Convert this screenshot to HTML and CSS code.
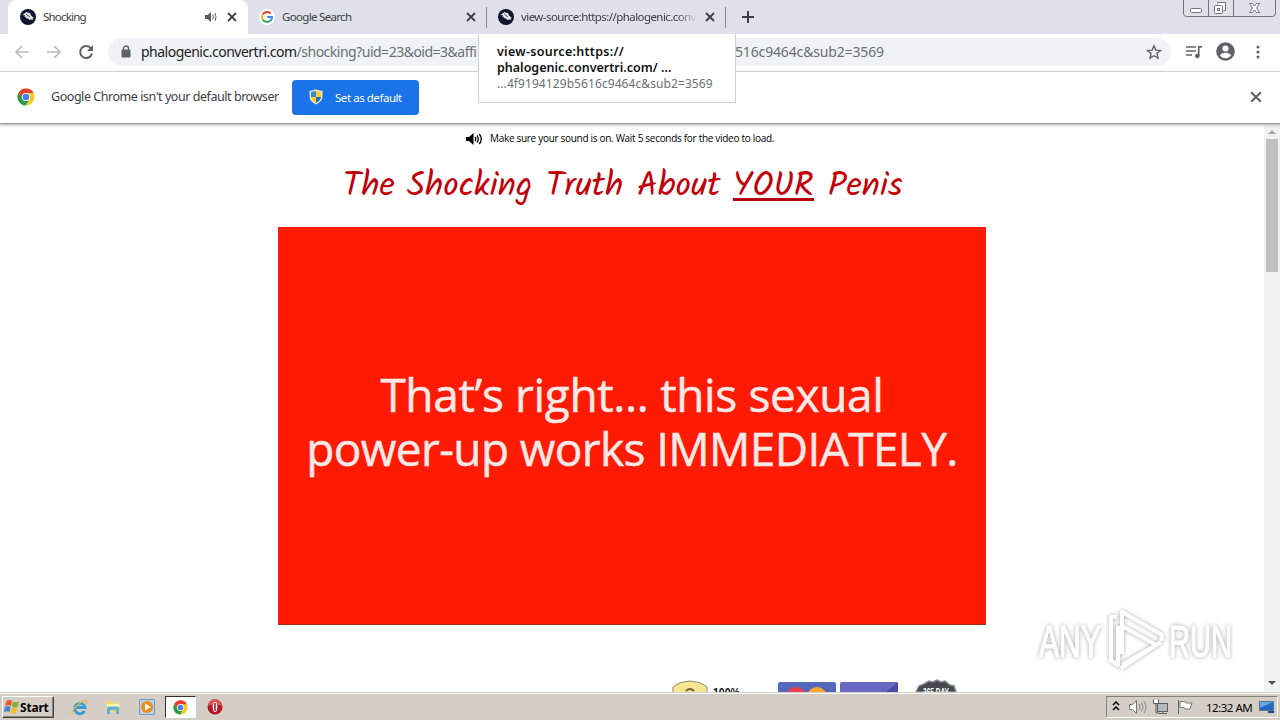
FILE: index.html
```html
<!DOCTYPE html>
<html lang="en">
<head>
  <meta charset="UTF-8">
  <title>Shocking</title>
  <link rel="stylesheet" href="styles.css">
</head>
<body>
  <svg width="0" height="0" class="defs">
    <symbol id="bird" viewBox="0 0 16 16">
      <circle cx="8" cy="8" r="8" fill="#11142f"/>
      <path d="M2.500 6 6.500 3l1.500.7L10 4l1 2.500 3 2.500-1.500.2 1 1.600-2.500-.3-1.500.5L8 9.500l-2.800-.5 1.200-1L4 7.500l1.500-1z" fill="#e4e7ec"/>
      <path d="m6 5 4 3" stroke="#11142f" stroke-width=".7"/>
    </symbol>
    <symbol id="chrome" viewBox="0 0 18 18">
      <circle cx="9" cy="9" r="8.5" fill="#fbc926"/>
      <path d="M1.6 4.8A8.5 8.5 0 0 1 16.6 5H9a4 4 0 0 0-3.800 5z" fill="#e53d30"/>
      <path d="M1.6 4.8A8.5 8.5 0 0 0 8.5 17.5l4-6.5a4 4 0 0 1-7.200-.3z" fill="#249a50"/>
      <circle cx="9" cy="9" r="4.1" fill="#fff"/>
      <circle cx="9" cy="9" r="3.3" fill="#4382ec"/>
    </symbol>
    <symbol id="close" viewBox="0 0 10 10">
      <path d="m1 1 8 8M9 1 1 9" stroke="currentColor" stroke-width="1.8"/>
    </symbol>
  </svg>

  <div class="tabstrip">
    <div class="tab active">
      <svg class="favicon"><use href="#bird"/></svg>
      <span class="title t-shocking">Shocking</span>
      <svg class="audio" width="13" height="10" viewBox="0 0 13 10"><path d="M0 3h2.500L6 0v10L2.500 7H0z" fill="#5a5d62"/><path d="M7.700 2.500q1.500 2.500 0 5M10 1q2 4 0 8" fill="none" stroke="#5a5d62"/></svg>
      <svg class="close"><use href="#close"/></svg>
    </div>
    <div class="tab">
      <span class="google"><svg width="12" height="12" viewBox="0 0 12 12" fill="none" stroke-width="2"><path d="M9.700 2.500A5 5 0 0 0 1.700 3.500" stroke="#ea4335"/><path d="M1.700 3.500a5 5 0 0 0 0 5" stroke="#fbbc05"/><path d="M1.700 8.500a5 5 0 0 0 7.500 1.300" stroke="#34a853"/><path d="M6.200 6H11q0 2.500-1.800 3.800" stroke="#4285f4"/></svg></span>
      <span class="title t-search">Google Search</span>
      <svg class="close"><use href="#close"/></svg>
    </div>
    <div class="tab last">
      <svg class="favicon"><use href="#bird"/></svg>
      <span class="title t-source">view-source:https://phalogenic.conv</span>
      <svg class="close"><use href="#close"/></svg>
    </div>
    <svg class="newtab" width="12" height="12" viewBox="0 0 12 12"><path d="M6 0v12M0 6h12" stroke="#3c4043" stroke-width="2"/></svg>
    <svg class="winbtns" width="93" height="17" viewBox="0 0 93 17" fill="none" stroke="#70757d">
      <path d="M.5 0v13q0 3.500 3 3.500h86q3 0 3-3.500V0M25.500 0v16M50.500 0v16"/>
      <rect x="7.500" y="8.500" width="11" height="4" rx="1" fill="#fff"/>
      <path d="M34.500 3.500v-1h8v8h-2" fill="#fff"/>
      <rect x="31.500" y="5.500" width="8" height="8" rx="1" fill="#fff"/><rect x="34.500" y="8.500" width="2" height="2"/>
      <path d="M66.500 3.500h3l2 2.500 2-2.500h3L73.500 8l3 4.500h-3l-2-2.500-2 2.500h-3l3-4.500z" fill="#fff"/>
    </svg>
  </div>

  <div class="toolbar">
    <svg class="nav" width="88" height="18" viewBox="0 0 88 18" fill="none" stroke="#b9bbbf" stroke-width="1.700">
      <path d="M15.500 9H3M9 3 3 9l6 6M34 9h13M41 3l6 6-6 6"/>
      <path d="M78 5.500A6 6 0 1 0 79 10.500" stroke="#5f6368" stroke-width="2"/><path d="M80 2v6h-6z" fill="#5f6368" stroke="none"/>
    </svg>
    <div class="omnibox">
      <svg width="10" height="13" viewBox="0 0 10 13"><path d="M2.500 5V3.500a2.500 2.500 0 0 1 5 0V5" fill="none" stroke="#5f6368" stroke-width="1.400"/><rect x=".5" y="4.500" width="9" height="8" rx="1" fill="#5f6368"/></svg>
      <span class="url"><b>phalogenic.convertri.com</b>/shocking?uid=23&amp;oid=3&amp;affi</span>
      <span class="url-end">516c9464c&amp;sub2=3569</span>
      <svg class="star" width="16" height="16" viewBox="0 0 16 16"><path d="m8 1.800 1.800 4.300 4.700.4-3.600 3 1.100 4.600L8 11.700l-4 2.400 1.100-4.600-3.600-3 4.700-.4z" fill="none" stroke="#5f6368" stroke-width="1.400"/></svg>
    </div>
    <svg class="media" width="16" height="14" viewBox="0 0 16 14"><path d="M0 2h10M0 6h10M0 10h6" stroke="#5f6368" stroke-width="1.700"/><path d="M12.700 11V1.800H16" fill="none" stroke="#5f6368" stroke-width="1.700"/><circle cx="11.300" cy="11" r="2.300" fill="#5f6368"/></svg>
    <svg class="person" width="19" height="19" viewBox="0 0 19 19"><circle cx="9.500" cy="9.500" r="9.300" fill="#5f6368"/><circle cx="9.500" cy="6.500" r="3" fill="#fff"/><path d="M3.800 13.200q2.200-2.400 5.700-2.400t5.700 2.400q-2 3-5.700 3t-5.700-3z" fill="#fff"/></svg>
    <svg class="more" width="4" height="14" viewBox="0 0 4 14" fill="#5f6368"><circle cx="2" cy="2" r="1.500"/><circle cx="2" cy="7" r="1.500"/><circle cx="2" cy="12" r="1.500"/></svg>
  </div>

  <div class="infobar">
    <svg class="logo" width="18" height="18"><use href="#chrome"/></svg>
    <span class="info-text">Google Chrome isn't your default browser</span>
    <div class="default-btn">
      <svg width="14" height="16" viewBox="0 0 14 16"><path d="M7 .5 13.500 2v5q0 5.500-6.500 8.500Q.5 12.500.5 7V2z" fill="#eee6c0"/><path d="M7 2v6H2V3z" fill="#3d86d6"/><path d="M7 2v6h5V3z" fill="#f8ce32"/><path d="M2 8h5v6Q2.500 11.500 2 8z" fill="#f8ce32"/><path d="M12 8H7v6q4.500-2.500 5-6z" fill="#286dbe"/></svg>
      <span>Set as default</span>
    </div>
    <svg class="close" viewBox="0 0 10 10"><use href="#close"/></svg>
  </div>

  <div class="viewport">
    <div class="page">
      <div class="sound">
        <svg width="17" height="12" viewBox="0 0 17 12"><path d="M0 4h3l4.500-4v12L3 8H0z"/><path d="M9 4q1.500 2 0 4M11 2.500q2.500 3.500 0 7M13.300 1q4 5 0 10" fill="none" stroke="#000" stroke-width="1.300"/></svg>
        <span>Make sure your sound is on. Wait 5 seconds for the video to load.</span>
      </div>
      <h1><span class="w1">The</span><span class="w2">Shocking</span><span class="w3">Truth</span><span class="w4">About</span><u class="w5">YOUR</u><span class="w6">Penis</span></h1>
      <div class="video">
        <div class="line1">That’s right... this sexual</div>
        <div class="line2">power-up works IMMEDIATELY.</div>
      </div>
      <svg class="badges" width="286" height="13" viewBox="0 0 286 13">
        <path d="M1 14V8Q3 6 9 3.500q9-3 18 0Q33 6 35 8v6z" fill="#f8e693" stroke="#8f8872"/>
        <path d="M14 12q4-4 8 0" fill="none" stroke="#76663b" stroke-width="2"/>
        <text x="41" y="18" class="pct" textLength="27" lengthAdjust="spacingAndGlyphs">100%</text>
        <rect x="106" y="3" width="58" height="30" rx="2" fill="#5368bb"/>
        <circle cx="124" cy="18" r="10" fill="#ee3e4d"/><circle cx="145" cy="18" r="10" fill="#fba62d"/>
        <rect x="168" y="3" width="58" height="30" rx="2" fill="#6867c2"/><path d="M226 3v10h-12z" fill="#4a4cac"/>
        <path d="m244 13 3-6 5-2 5-3 4 1 4-2 4 2 4-1 5 4 4 1 2 6z" fill="#44494f" stroke="#858a8e" stroke-width="1.500"/>
        <text x="251" y="17" class="days" textLength="26" lengthAdjust="spacingAndGlyphs">365 DAY</text>
      </svg>
    </div>
    <div class="scrollbar">
      <svg width="8" height="5" viewBox="0 0 8 5"><path d="m0 4 4-4 4 4z" fill="#a3a3a3"/></svg>
      <div class="thumb"></div>
      <svg width="8" height="5" viewBox="0 0 8 5"><path d="m0 0 4 4 4-4z" fill="#505050"/></svg>
    </div>
  </div>

  <div class="taskbar">
    <div class="start">
      <svg width="16" height="16" viewBox="0 0 16 16"><path d="M2.500 2q3-2 5.500 0L7 7Q4.500 5.500 1 7z" fill="#eb5b24"/><path d="M9 2.500q3 1.500 6 0L13.500 8q-3 1-5.500-.5z" fill="#7bb52c"/><path d="M1 8q3-1.500 5.500 0l-1 5Q3 11.500 0 13z" fill="#3d83d1"/><path d="M7.500 8.500q3 1.500 6 0L12 14q-3 1-5.500-.5z" fill="#f7bf2c"/></svg>
      <b>Start</b>
    </div>
    <svg class="ie" width="17" height="17" viewBox="0 0 17 17" fill="none"><path d="M13.500 12A5.200 5.200 0 1 1 14 8.500H5" stroke="#3a9ada" stroke-width="2.800"/><path d="M2 15q-3-1 3-7.500T15.500 2q1 1-1 3.500" stroke="#e5b83c" stroke-width="1.300"/></svg>
    <svg class="folder" width="16" height="16" viewBox="0 0 16 16"><path d="M1 2h5l1 1.500h8V13H1z" fill="#eed67b"/><path d="M2 5h12v4H2z" fill="#fff3b6"/><path d="M2 15V9q0-1.500 2-1.500h8q2 0 2 1.500v6h-3v-4H5v4z" fill="#61b0d5"/></svg>
    <svg class="wmp" width="16" height="16" viewBox="0 0 16 16"><path d="M.5.5h15v15H.5z" fill="#b7d1e7" stroke="#719fc6"/><circle cx="8" cy="8" r="6" fill="#f18b1b"/><path d="m6 4.500 6 3.500-6 3.500z" fill="#fff"/></svg>
    <div class="running"><svg width="15" height="15"><use href="#chrome"/></svg></div>
    <svg class="opera" width="16" height="16" viewBox="0 0 16 16"><circle cx="8" cy="8" r="7.500" fill="#b81720"/><path d="M1 7a7 7 0 0 1 14 0Q8 4 1 7z" fill="#db5254"/><ellipse cx="8" cy="8" rx="2.300" ry="5" fill="#fff"/><path d="M8 4v8" stroke="#a31018" stroke-width="1.500"/></svg>
    <div class="tray">
      <svg width="84" height="18" viewBox="0 0 84 18" fill="none">
        <path d="m1 7 3-3 3 3M1 12l3-3 3 3" stroke="#000" stroke-width="1.500"/>
        <path d="M17.500 6.500h3l4-4v13l-4-4h-3z" fill="#fff" stroke="#73777a"/><path d="M27 6q2 3 0 6M29.500 4.500q3 4.500 0 9M32 3q4 6 0 12" stroke="#85898b"/>
        <rect x="45.500" y="5.500" width="10" height="8" fill="#b3b8bc" stroke="#5c6063"/><path d="M47 15.500h8M51 13v3M41.500 1.500v4h5v-4M44 5v10h3" stroke="#5c6063"/><path d="M42 2h4v3h-4z" fill="#fff"/>
        <path d="M66.500 2v14" stroke="#606467"/><path d="M68 3.500h5l1 1.500h6l-2 6h-5l-1-1.500h-4z" fill="#fff" stroke="#75797b"/>
      </svg>
      <span>12:32 AM</span>
      <svg width="16" height="14" viewBox="0 0 16 14"><path d="M.5 1.500h14v9H.5z" fill="#2467c0" stroke="#5b748f"/><path d="M1 2h13L1 8z" fill="#64a8e9"/><path d="M9 11h6v2H9z" fill="#17488b"/></svg>
    </div>
  </div>

  <div class="tooltip">
    <div class="tip1">view-source:https://</div>
    <div class="tip2">phalogenic.convertri.com/ ...</div>
    <div class="tip3">...4f9194129b5616c9464c&amp;sub2=3569</div>
  </div>

  <svg class="watermark" width="204" height="70" viewBox="0 0 204 70">
    <text x="5" y="51" textLength="62" lengthAdjust="spacingAndGlyphs">ANY</text>
    <text x="135" y="51" textLength="63" lengthAdjust="spacingAndGlyphs">RUN</text>
    <path d="M83 11h-6v43l7 5V20M88 48V6l40 23-1 6M88 20l34 19-34 20M127 36 87 62" fill="none" stroke="#fff" stroke-width="4" stroke-linejoin="round"/>
  </svg>
</body>
</html>
```
FILE: styles.css
```css
* {
  box-sizing: border-box;
}
body {
  margin: 0;
  width: 1280px;
  height: 720px;
  overflow: hidden;
  background: #fff;
  font-family: "Noto Sans", "Open Sans", sans-serif;
  font-size: 12px;
  color: #3c4043;
  display: flex;
  flex-direction: column;
  position: relative;
}
.defs {
  position: absolute;
}
svg {
  display: block;
  flex: none;
}
span, b, .tooltip div, .video div {
  white-space: nowrap;
}

/* tabs */
.tabstrip {
  height: 34px;
  flex: none;
  background: #dee1e9;
  display: flex;
}
.tab {
  width: 239px;
  height: 34px;
  padding: 0 10px 0 11px;
  display: flex;
  align-items: center;
  border-right: 1px solid #84878d;
  border-image: linear-gradient(transparent 8px, #84878d 8px, #84878d 27px, transparent 27px) 1;
}
.tab.active {
  width: 240px;
  margin-left: 8px;
  padding-left: 12px;
  background: #fff;
  border: 0;
  border-radius: 8px 8px 0 0;
}
.favicon {
  width: 16px;
  height: 16px;
}
.google {
  width: 16px;
  height: 16px;
  border-radius: 50%;
  background: #fff;
  display: grid;
  place-items: center;
}
.title {
  margin-left: 7px;
  line-height: 18px;
  font-size: 11.5px;
}
.t-search {
  letter-spacing: -0.68px;
}
.t-shocking {
  letter-spacing: -0.8px;
}
.t-source {
  width: 176px;
  overflow: hidden;
  letter-spacing: -0.57px;
  -webkit-mask-image: linear-gradient(90deg, #000 88%, transparent);
}
.close {
  width: 10px;
  height: 10px;
  margin-left: auto;
}
.audio {
  margin-left: auto;
  margin-right: 9px;
}
.audio + .close {
  margin-left: 0;
  margin-right: 1px;
}
.newtab {
  margin: 11px 0 0 16px;
}
.winbtns {
  margin: 0 4px 0 auto;
}

/* toolbar */
.toolbar {
  height: 38px;
  flex: none;
  border-bottom: 1px solid #d8dadd;
  display: flex;
  align-items: center;
  padding: 0 0 2px 13px;
}
.nav {
  margin-right: 7px;
}
.omnibox {
  width: 1063px;
  height: 28px;
  border-radius: 14px;
  background: #f0f3f6;
  display: flex;
  align-items: center;
  padding: 0 9px 0 13px;
  font-size: 14px;
  color: #6b6f74;
}
.url {
  width: 337px;
  margin: 0 257px 0 10px;
  letter-spacing: -0.5px;
}
.url b {
  font-weight: normal;
  color: #202124;
  letter-spacing: -0.5px;
}
.url-end {
  letter-spacing: -0.15px;
}
.star {
  margin-left: auto;
}
.media {
  margin-left: 15px;
}
.person {
  margin-left: 14px;
}
.more {
  margin-left: 21px;
}

/* default browser notice */
.infobar {
  height: 52px;
  flex: none;
  border-bottom: 1px solid #9b9b9b;
  display: flex;
  align-items: center;
  padding: 0 19px 0 17px;
  box-shadow: 0 1px 3px #aaa;
  position: relative;
}
.logo {
  margin-bottom: 2px;
}
.info-text {
  margin: 0 0 2px 16px;
  width: 241px;
  font-size: 12.5px;
  letter-spacing: -0.45px;
}
.default-btn {
  width: 127px;
  height: 35px;
  border-radius: 4px;
  background: #1a73e8;
  color: #fff;
  display: flex;
  align-items: center;
  gap: 12px;
  padding: 0 0 1px 17px;
  font-size: 11.5px;
  letter-spacing: -0.45px;
}
.infobar .close {
  width: 12px;
  height: 12px;
  margin: 0 -1px 2px auto;
  color: #5f6368;
}

/* page */
.viewport {
  height: 568px;
  flex: none;
  display: flex;
  overflow: hidden;
}
.page {
  width: 1264px;
  display: flex;
  flex-direction: column;
}
.sound {
  height: 30px;
  padding-left: 466px;
  display: flex;
  align-items: center;
  gap: 7px;
  font: 10px "Open Sans", sans-serif;
  color: #000;
  letter-spacing: -0.3px;
}
.sound span {
  margin-bottom: 2px;
}
h1 {
  height: 73px;
  margin: 0;
  padding: 12px 0 0 343px;
  display: flex;
  font: 400 34px/42px Kalam, Lato, sans-serif;
  color: #c30009;
}
h1 > * {
  flex: none;
}
.w1 { width: 64px; }
.w2 { width: 139px; }
.w3 { width: 91px; }
.w4 { width: 96px; }
.w5 { width: 81px; height: 35px; margin-right: 14px; border-bottom: 3px solid #b5000d; text-decoration: none; }
.w6 { width: 76px; }
.video {
  width: 708px;
  height: 398px;
  margin-left: 278px;
  padding-top: 140px;
  background: #ff1a03;
  border-bottom: 1px solid #a72818;
  font: 46px/54px "Open Sans", "Noto Sans", sans-serif;
  letter-spacing: -0.63px;
  -webkit-text-stroke: 0.5px #fbe9e8;
  color: #fbe9e8;
  text-align: center;
}
.line1 {
  letter-spacing: -0.35px;
}
.badges {
  margin: 54px 0 0 672px;
}
.pct {
  font: bold 12px "Liberation Sans", sans-serif;
  fill: #171717;
}
.days {
  font: bold 10px "Liberation Sans", sans-serif;
  fill: #fff;
}
.scrollbar {
  width: 16px;
  background: #f1f1f1;
  display: flex;
  flex-direction: column;
  align-items: center;
  padding: 6px 0 6px;
}
.thumb {
  width: 12px;
  height: 133px;
  margin: 4px 0 auto;
  background: #c1c1c1;
}

/* taskbar */
.taskbar {
  height: 28px;
  flex: none;
  background: #d5cec6;
  border-top: 1px solid #d5cec6;
  box-shadow: inset 0 1px #fff;
  display: flex;
  align-items: center;
  padding: 1px 2px 0;
}
.start {
  width: 52px;
  height: 22px;
  border: 1px solid;
  border-color: #fff #404040 #404040 #fff;
  box-shadow: inset -1px -1px #88847e;
  display: flex;
  align-items: center;
  padding-left: 1px;
  font-size: 12px;
  color: #000;
}
.start b {
  letter-spacing: -0.2px;
}
.ie { margin-left: 17px; }
.folder { margin-left: 17px; }
.wmp { margin-left: 18px; }
.running {
  width: 31px;
  height: 22px;
  margin: 0 11px 0 10px;
  background: #fff;
  border: 1px solid;
  border-color: #303030 #fff #fff #303030;
  display: grid;
  place-items: center;
}
.tray {
  width: 172px;
  height: 22px;
  margin-left: auto;
  border: 1px solid;
  border-color: #85817b #fff #fff #85817b;
  display: flex;
  align-items: center;
  padding-left: 5px;
  color: #000;
}
.tray span {
  width: 47px;
  margin: 0 6px 0 10px;
  font-size: 11.5px;
  letter-spacing: -0.5px;
}

/* tab hover card */
.tooltip {
  position: absolute;
  left: 478px;
  top: 34px;
  width: 258px;
  height: 69px;
  padding: 10px 18px;
  background: #fff;
  border: 1px solid #cdcfd2;
  border-top: 0;
  line-height: 16px;
  color: #111;
}
.tip1, .tip2 {
  font-size: 12.5px;
  font-weight: 600;
}
.tip1 {
  letter-spacing: 0.28px;
}
.tip3 {
  color: #6c6f73;
  letter-spacing: 0.08px;
}
.watermark {
  position: absolute;
  left: 1034px;
  top: 606px;
  filter: drop-shadow(0 0 2px #aaa);
}
.watermark text {
  font: 44px "Liberation Sans", sans-serif;
  fill: #fff;
  stroke: #fff;
  stroke-width: 1.2px;
}
```
